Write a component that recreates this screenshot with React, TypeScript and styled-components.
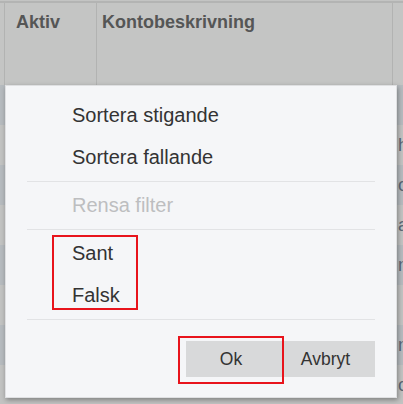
import React from 'react';
import styled, { createGlobalStyle } from 'styled-components';

// ============================================================================
// Global
// ============================================================================

const GlobalStyle = createGlobalStyle`
  html, body {
    margin: 0;
    padding: 0;
    background: #c3c4c3;
    overflow: hidden;
  }
  body {
    font-family: "Liberation Sans", Arial, sans-serif;
  }
  *, *::before, *::after {
    box-sizing: border-box;
  }
`;

// ============================================================================
// Grid behind the menu (dimmed)
// ============================================================================

const Page = styled.div`
  position: relative;
  width: 403px;
  height: 404px;
  overflow: hidden;
  background: #c3c4c3;
`;

const Grid = styled.div`
  border-top: 2px solid #b3b4b3;
  margin-top: 1px;
`;

const HeaderRow = styled.div`
  display: grid;
  grid-template-columns: 4px 92px 296px 1fr;
  height: 82px;
  background: #c4c5c4;
`;

const HeaderCell = styled.div<{ $pad?: number }>`
  border-left: 1px solid #b2b3b2;
  padding: 8px 0 0 ${p => p.$pad ?? 5}px;
  font-size: 18px;
  font-weight: bold;
  line-height: 22px;
  color: #555656;

  &:first-child {
    border-left: none;
  }
`;

const Row = styled.div<{ $alt: boolean }>`
  display: grid;
  grid-template-columns: 4px 92px 296px 1fr;
  height: 40px;
  background: ${p => (p.$alt ? '#c2c3c2' : '#b6bbbf')};
`;

const Cell = styled.div`
  padding: 0 0 0 6px;
  font-size: 18px;
  line-height: 40px;
  color: #5b6876;
  white-space: nowrap;
  overflow: hidden;
`;

// ============================================================================
// Filter menu
// ============================================================================

const Menu = styled.div`
  position: absolute;
  left: 5px;
  top: 85px;
  width: 392px;
  padding: 8px 21px 20px;
  background: #f5f6f8;
  border: 1px solid #dfe0e2;
  box-shadow: 1px 2px 5px rgba(0, 0, 0, 0.35);
  font-family: "Liberation Sans", Arial, sans-serif;
`;

const Item = styled.div<{ $disabled?: boolean }>`
  height: 42px;
  line-height: 42px;
  padding-left: 45px;
  font-size: 20px;
  color: ${p => (p.$disabled ? '#bdbec0' : '#333333')};
  cursor: ${p => (p.$disabled ? 'default' : 'pointer')};
`;

const Separator = styled.div`
  height: 1px;
  margin: 3px 0 2px;
  background: #e2e3e5;
`;

const Group = styled.div`
  position: relative;
`;

const HighlightBox = styled.div`
  position: absolute;
  left: 25px;
  top: 3px;
  width: 86px;
  height: 75px;
  border: 2px solid #e8141c;
  pointer-events: none;
`;

const Buttons = styled.div`
  display: flex;
  justify-content: flex-end;
  margin-top: 21px;
`;

const Button = styled.button<{ $width: number }>`
  width: ${p => p.$width}px;
  height: 36px;
  border: none;
  background: #d8d9da;
  color: #333333;
  font-family: "Liberation Sans", Arial, sans-serif;
  font-size: 17.5px;
  padding: 0;
  cursor: pointer;
`;

const Marked = styled.span`
  position: relative;
  display: flex;

  &::after {
    content: '';
    position: absolute;
    left: -8px;
    top: -5px;
    right: -8px;
    bottom: -7px;
    border: 2px solid #e8141c;
    pointer-events: none;
  }
`;

// ============================================================================
// App
// ============================================================================

const rows = ['', 'h', 'o', 'a', 'n', '', 'n', 'c'];

export default function App() {
  return (
    <Page>
      <GlobalStyle />
      <Grid>
        <HeaderRow>
          <HeaderCell />
          <HeaderCell $pad={11}>Aktiv</HeaderCell>
          <HeaderCell>Kontobeskrivning</HeaderCell>
          <HeaderCell />
        </HeaderRow>
        {rows.map((text, i) => (
          <Row key={i} $alt={i % 2 === 1}>
            <Cell />
            <Cell />
            <Cell />
            <Cell>{text}</Cell>
          </Row>
        ))}
      </Grid>

      <Menu>
        <Item>Sortera stigande</Item>
        <Item>Sortera fallande</Item>
        <Separator />
        <Item $disabled>Rensa filter</Item>
        <Separator />
        <Group>
          <Item>Sant</Item>
          <Item>Falsk</Item>
          <HighlightBox />
        </Group>
        <Separator />
        <Buttons>
          <Marked>
            <Button $width={90}>Ok</Button>
          </Marked>
          <Button $width={99}>Avbryt</Button>
        </Buttons>
      </Menu>
    </Page>
  );
}
